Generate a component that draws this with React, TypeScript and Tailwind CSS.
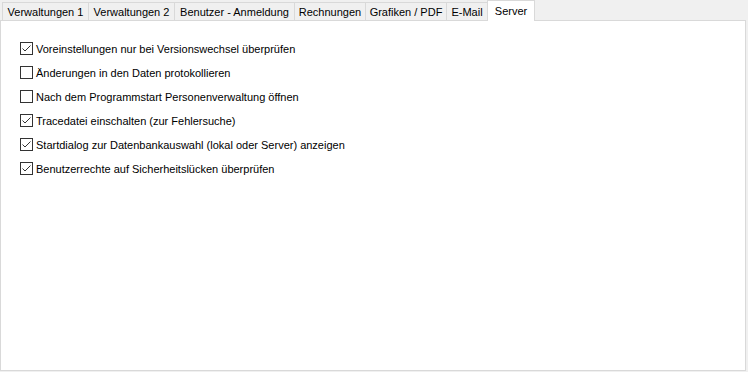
import React from "react";

const tabs = [
  { label: "Verwaltungen 1", w: "w-[86px]" },
  { label: "Verwaltungen 2", w: "w-[86px]" },
  { label: "Benutzer - Anmeldung", w: "w-[120px]" },
  { label: "Rechnungen", w: "w-[71px]" },
  { label: "Grafiken / PDF", w: "w-[81px]" },
  { label: "E-Mail", w: "w-[41px]" },
];

const items = [
  { label: "Voreinstellungen nur bei Versionswechsel überprüfen", checked: true },
  { label: "Änderungen in den Daten protokollieren", checked: false },
  { label: "Nach dem Programmstart Personenverwaltung öffnen", checked: false },
  { label: "Tracedatei einschalten (zur Fehlersuche)", checked: true },
  { label: "Startdialog zur Datenbankauswahl (lokal oder Server) anzeigen", checked: true },
  { label: "Benutzerrechte auf Sicherheitslücken überprüfen", checked: true },
];

function Check({ checked }: { checked: boolean }) {
  return (
    <div className="w-[13px] h-[13px] border border-[#333333] bg-white shrink-0 flex items-center justify-center">
      {checked && (
        <svg width="11" height="11" viewBox="0 0 11 11">
          <polyline points="1.5,5.5 4,8 9.5,2.5" fill="none" stroke="#333333" strokeWidth="1" />
        </svg>
      )}
    </div>
  );
}

export default function App() {
  return (
    <div
      className="w-[748px] h-[372px] bg-[#f0f0f0] text-black text-[11px]"
      style={{ fontFamily: '"Liberation Sans", Arial, sans-serif' }}
    >
      <div className="relative z-10 flex items-end h-[21px] pl-[2px]">
        {tabs.map((t) => (
          <div
            key={t.label}
            className={`${t.w} h-[18px] mb-px border-l border-t border-[#d9d9d9] bg-[#f0f0f0] flex items-center justify-center leading-none pt-px`}
          >
            {t.label}
          </div>
        ))}
        <div className="w-[48px] h-[21px] border-l border-t border-r border-[#d9d9d9] bg-white flex items-start justify-center pt-[5px] leading-none">
          Server
        </div>
      </div>
      <div className="-mt-px w-[746px] h-[351px] border border-[#d9d9d9] bg-white pt-[21px] pl-[19px] flex flex-col gap-[11px]">
        {items.map((it) => (
          <div key={it.label} className="flex items-center h-[13px] gap-[3px]">
            <Check checked={it.checked} />
            <span className="leading-[13px] whitespace-nowrap pt-px">{it.label}</span>
          </div>
        ))}
      </div>
    </div>
  );
}
